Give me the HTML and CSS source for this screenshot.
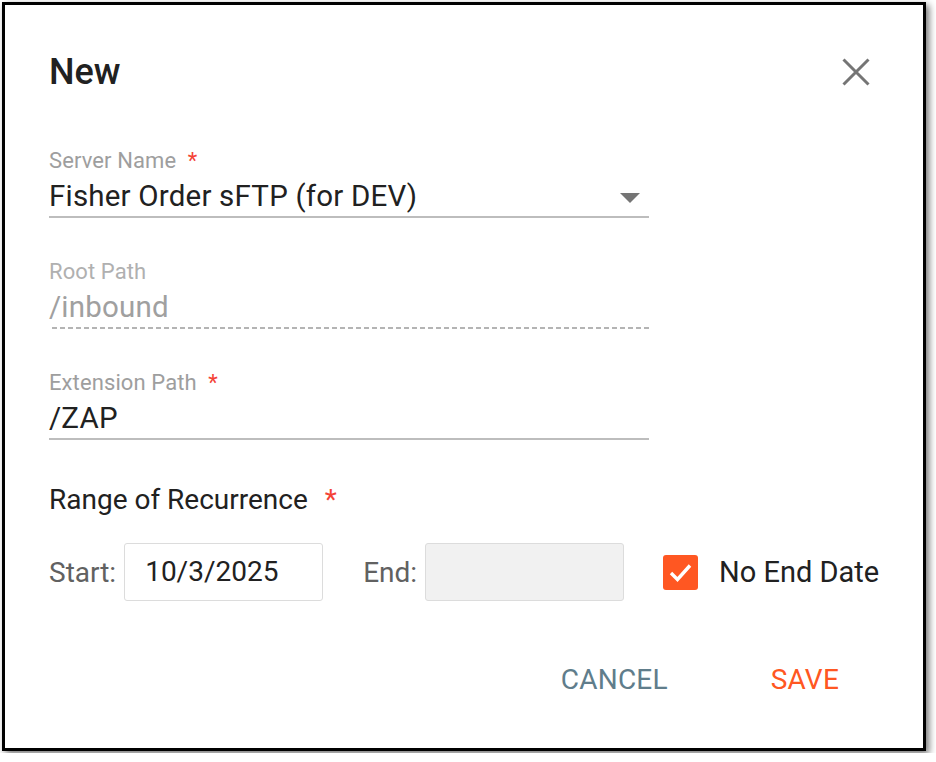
FILE: index.html
```html
<!DOCTYPE html>
<html lang="en">
<head>
<meta charset="utf-8">
<title>New</title>
<link rel="stylesheet" href="styles.css">
</head>
<body>
<div class="dialog">
  <div class="header">
    <h1 class="title">New</h1>
    <button class="close" aria-label="Close">
      <svg width="28" height="28" viewBox="0 0 28 28"><path d="M1.5 1.5 L26.5 26.5 M26.5 1.5 L1.5 26.5" stroke="#757575" stroke-width="3" fill="none"/></svg>
    </button>
  </div>

  <div class="field first">
    <div class="label">Server Name <span class="req">*</span></div>
    <div class="value select">
      <span>Fisher Order sFTP (for DEV)</span>
      <svg class="caret" width="20" height="10" viewBox="0 0 20 10"><path d="M0 0 H20 L10 10 Z" fill="#757575"/></svg>
    </div>
  </div>

  <div class="field disabled">
    <div class="label">Root Path</div>
    <div class="value">/inbound</div>
  </div>

  <div class="field">
    <div class="label">Extension Path <span class="req">*</span></div>
    <div class="value">/ZAP</div>
  </div>

  <div class="section-title">Range of Recurrence <span class="req">*</span></div>

  <div class="range-row">
    <span class="row-label">Start:</span>
    <div class="date-box">10/3/2025</div>
    <span class="row-label end-label">End:</span>
    <div class="date-box empty"></div>
    <div class="check">
      <svg width="35" height="35" viewBox="0 0 35 35"><path d="M8 18 L14.5 24.5 L27 10.5" stroke="#fff" stroke-width="3.4" fill="none"/></svg>
    </div>
    <span class="check-label">No End Date</span>
  </div>

  <div class="actions">
    <button class="btn cancel">CANCEL</button>
    <button class="btn save">SAVE</button>
  </div>
</div>
</body>
</html>
```

FILE: styles.css
```css
html, body {
  margin: 0;
  padding: 0;
  background: #fff;
}
body {
  font-family: Roboto, "Liberation Sans", sans-serif;
  padding: 2px;
}
.dialog {
  box-sizing: border-box;
  width: 924px;
  height: 749px;
  border: 3px solid #000;
  background: #fff;
  box-shadow: 3px 3px 7px rgba(0, 0, 0, 0.55);
  padding: 49px 45px 0 44px;
}
.header {
  display: flex;
  justify-content: space-between;
  align-items: center;
  height: 36px;
}
.title {
  margin: 0;
  font-size: 36px;
  line-height: 36px;
  font-weight: 500;
  color: #212121;
}
.close {
  border: 0;
  background: none;
  padding: 0;
  margin-right: 8px;
  width: 28px;
  height: 28px;
  display: flex;
}
.field {
  width: 600px;
  margin-top: 43px;
}
.field.first {
  margin-top: 60px;
}
.label {
  font-size: 22px;
  line-height: 22px;
  color: #9e9e9e;
  letter-spacing: 0.1px;
}
.req {
  color: #f44336;
  margin-left: 6px;
}
.value {
  margin-top: 9px;
  font-size: 29.5px;
  line-height: 30px;
  letter-spacing: 0.2px;
  color: #212121;
  padding-bottom: 5px;
  border-bottom: 2px solid #bdbdbd;
}
.select {
  display: flex;
  justify-content: space-between;
  align-items: center;
}
.caret {
  margin-right: 9px;
  margin-top: 3px;
}
.disabled .label {
  color: #b0b0b0;
}
.disabled .value {
  color: #a0a0a0;
  border-bottom: 0;
  padding-bottom: 7px;
  background-image: repeating-linear-gradient(to left, #b4b4b4 0 5px, transparent 5px 8px);
  background-size: 100% 2px;
  background-repeat: no-repeat;
  background-position: left bottom;
}
.section-title {
  margin-top: 46px;
  font-size: 28px;
  line-height: 28px;
  color: #212121;
}
.section-title .req {
  margin-left: 10px;
}
.range-row {
  margin-top: 29px;
  display: flex;
  align-items: center;
  height: 58px;
  white-space: nowrap;
}
.row-label {
  font-size: 28px;
  color: #616161;
  margin-right: 8px;
}
.end-label {
  margin-left: 40px;
}
.date-box {
  flex: none;
  box-sizing: border-box;
  width: 199px;
  height: 58px;
  border: 1.5px solid #dcdcdc;
  border-radius: 3px;
  font-size: 28px;
  line-height: 55px;
  padding-left: 20px;
  color: #212121;
  background: #fff;
}
.date-box.empty {
  background: #f1f1f1;
}
.check {
  flex: none;
  margin-left: 39px;
  width: 35px;
  height: 35px;
  border-radius: 3px;
  background: #ff5722;
  display: flex;
}
.check-label {
  flex: none;
  margin-left: 21px;
  font-size: 29px;
  color: #212121;
}
.actions {
  margin-top: 55px;
  display: flex;
  justify-content: flex-end;
  gap: 103px;
  padding-right: 39px;
}
.btn {
  border: 0;
  background: none;
  padding: 0;
  font-family: Roboto, "Liberation Sans", sans-serif;
  font-size: 28px;
  line-height: 48px;
  height: 48px;
  letter-spacing: 0.2px;
}
.cancel {
  color: #607d8b;
}
.save {
  color: #ff5722;
}
```
